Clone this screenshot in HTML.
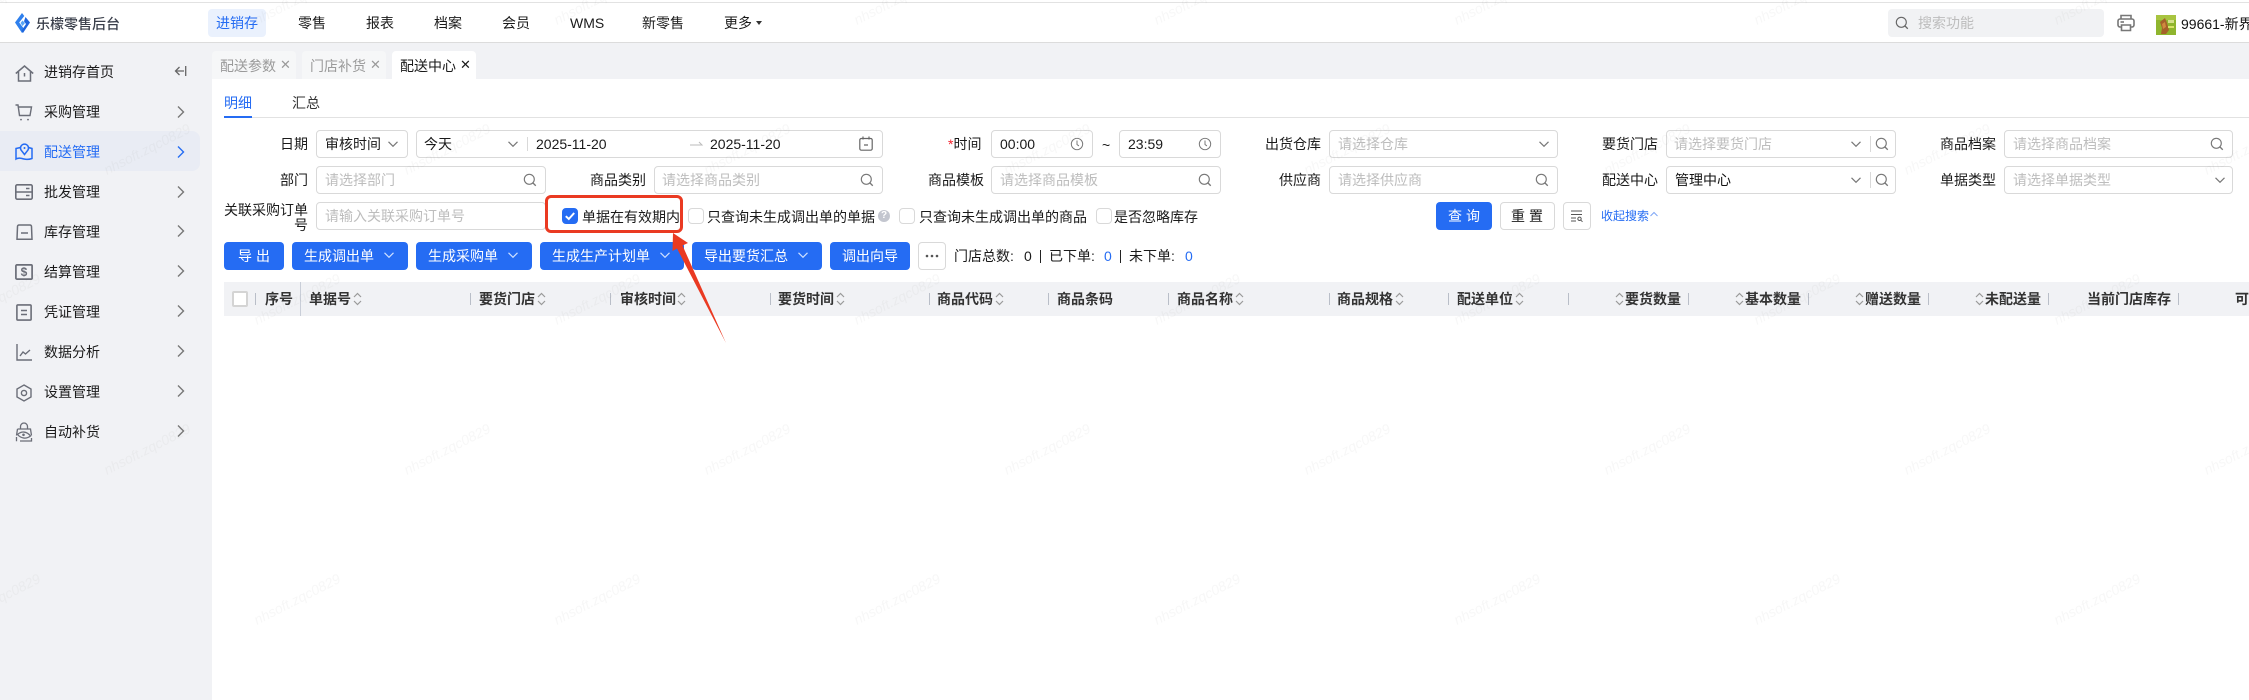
<!DOCTYPE html>
<html lang="zh">
<head>
<meta charset="utf-8">
<title>乐檬零售后台</title>
<style>
html,body{margin:0;padding:0;background:#fff}
body{width:2249px;height:700px;overflow:hidden;position:relative;font-family:"Liberation Sans","Noto Sans CJK SC",sans-serif;font-size:14px;color:#1a1a1a}
.a,.t,.b,.i,.cb{position:absolute}
.t{white-space:nowrap;line-height:20px;height:20px}
.i{box-sizing:border-box;height:28px;border:1px solid #d9d9d9;border-radius:4px;background:#fff}
.ph{color:#bdbdbd}
.b{box-sizing:border-box;top:242px;height:28px;background:#256cf3;border-radius:4px}
.w{color:#fff}
.cb{box-sizing:border-box;width:16px;height:16px;top:208px;border:1px solid #d9d9d9;border-radius:4px;background:#fff}
.th{font-weight:700;color:#333;top:289px}
.sp{position:absolute;top:293px;width:1px;height:12px;background:#b9bec8}
.so{position:absolute;top:292px;width:9px;height:14px}
.ic{position:absolute;overflow:visible}
.menu{top:13px;color:#1a1a1a}
.sm{left:44px;color:#1a1a1a}
</style>
</head>
<body>
<svg width="0" height="0" style="position:absolute">
<defs>
<symbol id="chev" viewBox="0 0 12 12"><path d="M1.5 3.8 6 8.3l4.5-4.5" fill="none" stroke="currentColor" stroke-width="1.2"/></symbol>
<symbol id="srch" viewBox="0 0 16 16"><circle cx="7.2" cy="7.2" r="5.7" fill="none" stroke="currentColor" stroke-width="1.3"/><path d="M11.4 11.4 14.6 14.6" fill="none" stroke="currentColor" stroke-width="1.5"/></symbol>
<symbol id="clock" viewBox="0 0 16 16"><circle cx="8" cy="8" r="6.5" fill="none" stroke="currentColor" stroke-width="1.1"/><path d="M8 4v4.6l2.2 1.6" fill="none" stroke="currentColor" stroke-width="1.1"/></symbol>
<symbol id="sort" viewBox="0 0 9 14"><path d="M1 5 4.5 1.5 8 5M1 9l3.5 3.5L8 9" fill="none" stroke="#9a9a9a" stroke-width="1.2"/></symbol>
<symbol id="right" viewBox="0 0 10 14"><path d="M2 1.5 7.5 7 2 12.5" fill="none" stroke="currentColor" stroke-width="1.4"/></symbol>
</defs>
</svg>

<!-- top bar -->
<div class="a" style="left:0;top:2px;width:2249px;height:1px;background:#e2e2e2"></div>
<div class="a" style="left:0;top:42px;width:2249px;height:1px;background:#dcdcdc"></div>
<svg class="ic" style="left:15px;top:13px" width="15" height="20" viewBox="0 0 15 20"><path d="M7 0 0 9.500 7 20 9.500 16.500 4.200 9.500 9.300 3Z" fill="#2f80ed"/><path d="M10.500 4 15 9.500 8 20 6.500 17.800 11 11 9 8.300Z" fill="#1f66dd"/><path d="M7.500 7.500 10 10 7.500 13 5.500 10Z" fill="#59a5f5"/></svg>
<div class="t" style="left:36px;top:14px;font-weight:500;color:#3a3f4b">乐檬零售后台</div>
<div class="a" style="left:208px;top:9px;width:58px;height:28px;border-radius:4px;background:#eaf1fd"></div>
<div class="t" style="left:216px;top:13px;color:#256cf3">进销存</div>
<div class="t menu" style="left:298px">零售</div>
<div class="t menu" style="left:366px">报表</div>
<div class="t menu" style="left:434px">档案</div>
<div class="t menu" style="left:502px">会员</div>
<div class="t menu" style="left:570px">WMS</div>
<div class="t menu" style="left:642px">新零售</div>
<div class="t menu" style="left:724px">更多</div>
<div class="a" style="left:756px;top:21px;width:0;height:0;border:3.5px solid transparent;border-top:4px solid #333;border-bottom:0"></div>

<div class="a" style="left:1888px;top:9px;width:216px;height:28px;border-radius:4px;background:#f1f2f4"></div>
<svg class="ic" style="left:1895px;top:16px;color:#666" width="14" height="14"><use href="#srch"/></svg>
<div class="t ph" style="left:1918px;top:13px">搜索功能</div>
<svg class="ic" style="left:2117px;top:14px" width="18" height="18" viewBox="0 0 18 18" fill="none" stroke="#777" stroke-width="1.6"><path d="M4 5V1.5h10V5"/><rect x="1" y="5" width="16" height="8" rx="2"/><path d="M4.5 11h9v5.5h-9z" fill="#fff"/><path d="M3.5 8H7"/></svg>
<svg class="ic" style="left:2156px;top:15px" width="20" height="20" viewBox="0 0 20 20"><rect width="20" height="20" fill="#8fb52e"/><rect x="0" y="0" width="20" height="5" fill="#a8c440"/><path d="M4 7 9 3l2 5 2 7-3 4H5l1-6z" fill="#a5612a"/><path d="M6 9l3-2 1 5-3 2z" fill="#d08a3e"/><rect x="12" y="5" width="6" height="3" fill="#d5e08c"/><rect x="12" y="11" width="6" height="2" fill="#d9e36a"/></svg>
<div class="t" style="left:2181px;top:14px;width:68px;overflow:hidden;color:#111">99661-新界店铺</div>

<!-- sidebar -->
<div class="a" style="left:0;top:43px;width:212px;height:657px;background:#f1f2f5"></div>
<div class="a" style="left:212px;top:43px;width:2037px;height:36px;background:#f1f2f5"></div>
<div class="a" style="left:0;top:131px;width:200px;height:40px;background:#e9ecf4;border-radius:0 8px 8px 0"></div>

<svg class="ic" style="left:15px;top:65px" width="19" height="17" viewBox="0 0 19 17" fill="none" stroke="#6b6e78" stroke-width="1.5"><path d="M0.8 8.5 9.5 1l8.7 7.5"/><path d="M3.5 6.8V16h12V6.8"/><path d="M9.5 8v3.5"/></svg>
<div class="t sm" style="top:62px">进销存首页</div>
<svg class="ic" style="left:173px;top:64px" width="14" height="14" viewBox="0 0 14 14" fill="none" stroke="#666" stroke-width="1.3"><path d="M6.5 3 2.5 7l4 4M2.5 7H11M12.7 2v10"/></svg>

<svg class="ic" style="left:15px;top:104px" width="18" height="17" viewBox="0 0 18 17" fill="none" stroke="#6b6e78" stroke-width="1.4"><path d="M0.5 1H3l1.500 10.500H15L16.500 3H3.300"/><circle cx="6" cy="15.600" r=".9" fill="#6b6e78" stroke="none"/><circle cx="13" cy="15.600" r=".9" fill="#6b6e78" stroke="none"/></svg>
<div class="t sm" style="top:102px">采购管理</div>

<svg class="ic" style="left:15px;top:143px" width="18" height="17" viewBox="0 0 18 17" fill="none" stroke="#256cf3" stroke-width="1.5"><path d="M5.500 4.500 1 5.500V16c2.500-1.500 5-.800 8 0s5 .500 8-.500V5.500l-3.500-1"/><path d="M9.500 11.500 6 7a4 4 0 1 1 7 0z"/><circle cx="9.500" cy="5" r="1" fill="#256cf3" stroke="none"/></svg>
<div class="t sm" style="top:142px;color:#256cf3">配送管理</div>

<svg class="ic" style="left:15px;top:184px" width="18" height="16" viewBox="0 0 18 16" fill="none" stroke="#6b6e78" stroke-width="1.6"><rect x=".8" y=".8" width="16.400" height="14.400" rx="1.500"/><path d="M.8 8h16.400M11 4.500h3.500M11 11.500h3.500"/></svg>
<div class="t sm" style="top:182px">批发管理</div>

<svg class="ic" style="left:16px;top:224px" width="17" height="17" viewBox="0 0 17 17" fill="none" stroke="#6b6e78" stroke-width="1.500"><path d="M3 1h11a1.500 1.500 0 0 1 1.500 1.500L16 15.200H1L1.500 2.500A1.500 1.500 0 0 1 3 1z"/><path d="M5 9h7"/></svg>
<div class="t sm" style="top:222px">库存管理</div>

<svg class="ic" style="left:15px;top:264px" width="18" height="16" viewBox="0 0 18 16" fill="none" stroke="#6b6e78" stroke-width="1.700"><rect x=".9" y=".9" width="16.200" height="14.200" rx="1"/></svg>
<div class="t" style="left:19px;top:262px;width:10px;text-align:center;font-size:12px;font-weight:700;color:#6b6e78">$</div>
<div class="t sm" style="top:262px">结算管理</div>

<svg class="ic" style="left:16px;top:304px" width="16" height="17" viewBox="0 0 16 17" fill="none" stroke="#6b6e78" stroke-width="1.600"><rect x=".9" y=".9" width="14.200" height="15.200" rx="1"/><path d="M5 6.500h6M5 10.500h6"/></svg>
<div class="t sm" style="top:302px">凭证管理</div>

<svg class="ic" style="left:16px;top:344px" width="16" height="17" viewBox="0 0 16 17" fill="none" stroke="#6b6e78" stroke-width="1.400"><path d="M1 0v16h15"/><path d="M4 12l3-4 2.500 2L14 6"/></svg>
<div class="t sm" style="top:342px">数据分析</div>

<svg class="ic" style="left:16px;top:384px" width="16" height="18" viewBox="0 0 16 18" fill="none" stroke="#6b6e78" stroke-width="1.400"><path d="M8 1l7 4v8l-7 4-7-4V5z"/><circle cx="8" cy="9" r="2.600"/></svg>
<div class="t sm" style="top:382px">设置管理</div>

<svg class="ic" style="left:15px;top:423px" width="18" height="19" viewBox="0 0 18 19" fill="none" stroke="#6b6e78" stroke-width="1.300"><path d="M5.500 6V3.500a3.500 3.500 0 0 1 7 0V6"/><path d="M2.500 6h13l1 6.500M1.500 12.500 2.500 6M1.500 18.300V14M5 18h11.500v-3"/><path d="M2.500 11.500c4-3.500 9-3.500 13 1.500-4 3-9 3-13-1.500z"/><circle cx="8.500" cy="11.800" r="1.300" fill="#6b6e78" stroke="none"/></svg>
<div class="t sm" style="top:422px">自动补货</div>

<svg class="ic" style="left:176px;top:105px;color:#777" width="10" height="14"><use href="#right"/></svg>
<svg class="ic" style="left:176px;top:145px;color:#256cf3" width="10" height="14"><use href="#right"/></svg>
<svg class="ic" style="left:176px;top:185px;color:#777" width="10" height="14"><use href="#right"/></svg>
<svg class="ic" style="left:176px;top:224px;color:#777" width="10" height="14"><use href="#right"/></svg>
<svg class="ic" style="left:176px;top:264px;color:#777" width="10" height="14"><use href="#right"/></svg>
<svg class="ic" style="left:176px;top:304px;color:#777" width="10" height="14"><use href="#right"/></svg>
<svg class="ic" style="left:176px;top:344px;color:#777" width="10" height="14"><use href="#right"/></svg>
<svg class="ic" style="left:176px;top:384px;color:#777" width="10" height="14"><use href="#right"/></svg>
<svg class="ic" style="left:176px;top:424px;color:#777" width="10" height="14"><use href="#right"/></svg>

<!-- tabs -->
<div class="a" style="left:212px;top:51px;width:84px;height:28px;background:#f6f7f8;border-radius:4px 4px 0 0"></div>
<div class="t" style="left:220px;top:56px;color:#9a9a9a">配送参数</div>
<div class="t" style="left:280px;top:55px;color:#9a9a9a;font-size:13px">✕</div>
<div class="a" style="left:302px;top:51px;width:84px;height:28px;background:#f6f7f8;border-radius:4px 4px 0 0"></div>
<div class="t" style="left:310px;top:56px;color:#9a9a9a">门店补货</div>
<div class="t" style="left:370px;top:55px;color:#9a9a9a;font-size:13px">✕</div>
<div class="a" style="left:392px;top:51px;width:84px;height:28px;background:#fff;border-radius:4px 4px 0 0"></div>
<div class="t" style="left:400px;top:56px">配送中心</div>
<div class="t" style="left:460px;top:55px;font-size:13px">✕</div>

<!-- sub tabs -->
<div class="t" style="left:224px;top:93px;color:#256cf3">明细</div>
<div class="t" style="left:292px;top:93px;color:#333">汇总</div>
<div class="a" style="left:224px;top:117px;width:2025px;height:1px;background:#e2e2e2"></div>
<div class="a" style="left:224px;top:116px;width:28px;height:2px;background:#256cf3"></div>

<!-- row 1 -->
<div class="t" style="left:280px;top:134px">日期</div>
<div class="i" style="left:316px;top:130px;width:92px"></div>
<div class="t" style="left:325px;top:134px">审核时间</div>
<svg class="ic" style="left:387px;top:138px;color:#777" width="12" height="12"><use href="#chev"/></svg>
<div class="i" style="left:416px;top:130px;width:467px"></div>
<div class="t" style="left:424px;top:134px">今天</div>
<svg class="ic" style="left:507px;top:138px;color:#777" width="12" height="12"><use href="#chev"/></svg>
<div class="a" style="left:527px;top:137px;width:1px;height:14px;background:#d9d9d9"></div>
<div class="t" style="left:536px;top:134px">2025-11-20</div>
<svg class="ic" style="left:690px;top:140px" width="13" height="8" viewBox="0 0 13 8" fill="none" stroke="#bbb"><path d="M0 5h12L9 2"/></svg>
<div class="t" style="left:710px;top:134px">2025-11-20</div>
<svg class="ic" style="left:859px;top:136px" width="14" height="15" viewBox="0 0 14 15" fill="none" stroke="#666" stroke-width="1.200"><rect x=".8" y="2.500" width="12.400" height="11.700" rx="1.500"/><path d="M4 .5v3M10 .5v3M5 9h4"/></svg>

<div class="t" style="left:948px;top:134px"><span style="color:#f5222d">*</span>时间</div>
<div class="i" style="left:991px;top:130px;width:102px"></div>
<div class="t" style="left:1000px;top:134px">00:00</div>
<svg class="ic" style="left:1070px;top:137px;color:#777" width="14" height="14"><use href="#clock"/></svg>
<div class="t" style="left:1102px;top:135px">~</div>
<div class="i" style="left:1119px;top:130px;width:102px"></div>
<div class="t" style="left:1128px;top:134px">23:59</div>
<svg class="ic" style="left:1198px;top:137px;color:#777" width="14" height="14"><use href="#clock"/></svg>

<div class="t" style="left:1265px;top:134px">出货仓库</div>
<div class="i" style="left:1329px;top:130px;width:229px"></div>
<div class="t ph" style="left:1338px;top:134px">请选择仓库</div>
<svg class="ic" style="left:1538px;top:138px;color:#777" width="12" height="12"><use href="#chev"/></svg>

<div class="t" style="left:1602px;top:134px">要货门店</div>
<div class="i" style="left:1666px;top:130px;width:230px"></div>
<div class="t ph" style="left:1674px;top:134px">请选择要货门店</div>
<svg class="ic" style="left:1850px;top:138px;color:#777" width="12" height="12"><use href="#chev"/></svg>
<div class="a" style="left:1870px;top:136px;width:1px;height:16px;background:#d9d9d9"></div>
<svg class="ic" style="left:1875px;top:137px;color:#777" width="14" height="14"><use href="#srch"/></svg>

<div class="t" style="left:1940px;top:134px">商品档案</div>
<div class="i" style="left:2004px;top:130px;width:229px"></div>
<div class="t ph" style="left:2013px;top:134px">请选择商品档案</div>
<svg class="ic" style="left:2210px;top:137px;color:#777" width="14" height="14"><use href="#srch"/></svg>

<!-- row 2 -->
<div class="t" style="left:280px;top:170px">部门</div>
<div class="i" style="left:316px;top:166px;width:230px"></div>
<div class="t ph" style="left:325px;top:170px">请选择部门</div>
<svg class="ic" style="left:523px;top:173px;color:#777" width="14" height="14"><use href="#srch"/></svg>

<div class="t" style="left:590px;top:170px">商品类别</div>
<div class="i" style="left:654px;top:166px;width:229px"></div>
<div class="t ph" style="left:662px;top:170px">请选择商品类别</div>
<svg class="ic" style="left:860px;top:173px;color:#777" width="14" height="14"><use href="#srch"/></svg>

<div class="t" style="left:928px;top:170px">商品模板</div>
<div class="i" style="left:991px;top:166px;width:230px"></div>
<div class="t ph" style="left:1000px;top:170px">请选择商品模板</div>
<svg class="ic" style="left:1198px;top:173px;color:#777" width="14" height="14"><use href="#srch"/></svg>

<div class="t" style="left:1279px;top:170px">供应商</div>
<div class="i" style="left:1329px;top:166px;width:229px"></div>
<div class="t ph" style="left:1338px;top:170px">请选择供应商</div>
<svg class="ic" style="left:1535px;top:173px;color:#777" width="14" height="14"><use href="#srch"/></svg>

<div class="t" style="left:1602px;top:170px">配送中心</div>
<div class="i" style="left:1666px;top:166px;width:230px"></div>
<div class="t" style="left:1675px;top:170px;color:#111">管理中心</div>
<svg class="ic" style="left:1850px;top:174px;color:#777" width="12" height="12"><use href="#chev"/></svg>
<div class="a" style="left:1870px;top:172px;width:1px;height:16px;background:#d9d9d9"></div>
<svg class="ic" style="left:1875px;top:173px;color:#777" width="14" height="14"><use href="#srch"/></svg>

<div class="t" style="left:1940px;top:170px">单据类型</div>
<div class="i" style="left:2004px;top:166px;width:229px"></div>
<div class="t ph" style="left:2013px;top:170px">请选择单据类型</div>
<svg class="ic" style="left:2214px;top:174px;color:#777" width="12" height="12"><use href="#chev"/></svg>

<!-- row 3 -->
<div class="t" style="left:224px;top:200px">关联采购订单</div>
<div class="t" style="left:294px;top:215px">号</div>
<div class="i" style="left:316px;top:202px;width:230px"></div>
<div class="t ph" style="left:325px;top:206px">请输入关联采购订单号</div>

<div class="cb" style="left:562px;background:#256cf3;border-color:#256cf3"></div>
<svg class="ic" style="left:562px;top:208px" width="16" height="16" viewBox="0 0 16 16" fill="none" stroke="#fff" stroke-width="2"><path d="M3.800 8.200 6.800 11l5.400-6"/></svg>
<div class="t" style="left:582px;top:207px">单据在有效期内</div>
<div class="cb" style="left:688px"></div>
<div class="t" style="left:707px;top:207px">只查询未生成调出单的单据</div>
<div class="a" style="left:878px;top:210px;width:12px;height:12px;border-radius:50%;background:#c3c6cf;color:#fff;font-size:10px;line-height:12px;text-align:center;font-weight:700">?</div>
<div class="cb" style="left:899px"></div>
<div class="t" style="left:919px;top:207px">只查询未生成调出单的商品</div>
<div class="cb" style="left:1096px"></div>
<div class="t" style="left:1114px;top:207px">是否忽略库存</div>

<div class="a" style="left:1436px;top:202px;width:56px;height:28px;background:#256cf3;border-radius:4px"></div>
<div class="t w" style="left:1448px;top:206px;letter-spacing:4px">查询</div>
<div class="a" style="box-sizing:border-box;left:1500px;top:202px;width:55px;height:28px;background:#fff;border:1px solid #d9d9d9;border-radius:4px"></div>
<div class="t" style="left:1511px;top:206px;letter-spacing:4px">重置</div>
<div class="a" style="box-sizing:border-box;left:1563px;top:202px;width:28px;height:28px;background:#fff;border:1px solid #d9d9d9;border-radius:4px"></div>
<svg class="ic" style="left:1571px;top:210px" width="12" height="12" viewBox="0 0 12 12" fill="none" stroke="#555" stroke-width="1"><path d="M0 1h11M0 4.500h11M0 8h5M0 11h5"/><circle cx="8.500" cy="8.800" r="1.700"/><path d="M10 10.300 11.500 11.800"/></svg>
<div class="t" style="left:1601px;top:206px;font-size:12px;color:#256cf3">收起搜索</div>
<svg class="ic" style="left:1650px;top:211px" width="8" height="6" viewBox="0 0 8 6" fill="none" stroke="#7ea6f5"><path d="M.5 5 4 1.500 7.500 5"/></svg>

<!-- buttons -->
<div class="b" style="left:224px;width:60px"></div>
<div class="t w" style="left:238px;top:246px;letter-spacing:4px">导出</div>
<div class="b" style="left:292px;width:116px"></div>
<div class="t w" style="left:304px;top:246px">生成调出单</div>
<svg class="ic" style="left:383px;top:249px;color:#cfe0ff" width="12" height="12"><use href="#chev"/></svg>
<div class="b" style="left:416px;width:116px"></div>
<div class="t w" style="left:428px;top:246px">生成采购单</div>
<svg class="ic" style="left:507px;top:249px;color:#cfe0ff" width="12" height="12"><use href="#chev"/></svg>
<div class="b" style="left:540px;width:144px"></div>
<div class="t w" style="left:552px;top:246px">生成生产计划单</div>
<svg class="ic" style="left:659px;top:249px;color:#cfe0ff" width="12" height="12"><use href="#chev"/></svg>
<div class="b" style="left:692px;width:130px"></div>
<div class="t w" style="left:704px;top:246px">导出要货汇总</div>
<svg class="ic" style="left:797px;top:249px;color:#cfe0ff" width="12" height="12"><use href="#chev"/></svg>
<div class="b" style="left:830px;width:80px"></div>
<div class="t w" style="left:842px;top:246px">调出向导</div>
<div class="a" style="box-sizing:border-box;left:918px;top:242px;width:28px;height:28px;background:#fff;border:1px solid #d9d9d9;border-radius:4px"></div>
<svg class="ic" style="left:925px;top:254px" width="14" height="4" viewBox="0 0 14 4" fill="#555"><circle cx="2" cy="2" r="1.300"/><circle cx="7" cy="2" r="1.300"/><circle cx="12" cy="2" r="1.300"/></svg>
<div class="t" style="left:954px;top:246px">门店总数:</div>
<div class="t" style="left:1024px;top:246px">0</div>
<div class="a" style="left:1040px;top:250px;width:1px;height:13px;background:#222"></div>
<div class="t" style="left:1049px;top:246px">已下单:</div>
<div class="t" style="left:1104px;top:246px;color:#256cf3">0</div>
<div class="a" style="left:1120px;top:250px;width:1px;height:13px;background:#222"></div>
<div class="t" style="left:1129px;top:246px">未下单:</div>
<div class="t" style="left:1185px;top:246px;color:#256cf3">0</div>

<!-- table header -->
<div class="a" style="left:224px;top:282px;width:2025px;height:34px;background:#f1f2f5"></div>
<div class="a" style="box-sizing:border-box;left:232px;top:291px;width:16px;height:16px;background:#fff;border:2px solid #d4d4d4;border-radius:2px"></div>
<div class="sp" style="left:255px"></div>
<div class="t th" style="left:265px">序号</div>
<div class="a" style="left:300px;top:282px;width:1px;height:34px;background:#c9ced8"></div>
<div class="t th" style="left:309px">单据号</div><svg class="so" style="left:353px"><use href="#sort"/></svg>
<div class="sp" style="left:470px"></div>
<div class="t th" style="left:479px">要货门店</div><svg class="so" style="left:537px"><use href="#sort"/></svg>
<div class="sp" style="left:610px"></div>
<div class="t th" style="left:620px">审核时间</div><svg class="so" style="left:677px"><use href="#sort"/></svg>
<div class="sp" style="left:770px"></div>
<div class="t th" style="left:778px">要货时间</div><svg class="so" style="left:836px"><use href="#sort"/></svg>
<div class="sp" style="left:929px"></div>
<div class="t th" style="left:937px">商品代码</div><svg class="so" style="left:995px"><use href="#sort"/></svg>
<div class="sp" style="left:1048px"></div>
<div class="t th" style="left:1057px">商品条码</div>
<div class="sp" style="left:1168px"></div>
<div class="t th" style="left:1177px">商品名称</div><svg class="so" style="left:1235px"><use href="#sort"/></svg>
<div class="sp" style="left:1329px"></div>
<div class="t th" style="left:1337px">商品规格</div><svg class="so" style="left:1395px"><use href="#sort"/></svg>
<div class="sp" style="left:1448px"></div>
<div class="t th" style="left:1457px">配送单位</div><svg class="so" style="left:1515px"><use href="#sort"/></svg>
<div class="sp" style="left:1568px"></div>
<svg class="so" style="left:1615px"><use href="#sort"/></svg><div class="t th" style="left:1625px">要货数量</div>
<div class="sp" style="left:1688px"></div>
<svg class="so" style="left:1735px"><use href="#sort"/></svg><div class="t th" style="left:1745px">基本数量</div>
<div class="sp" style="left:1808px"></div>
<svg class="so" style="left:1855px"><use href="#sort"/></svg><div class="t th" style="left:1865px">赠送数量</div>
<div class="sp" style="left:1928px"></div>
<svg class="so" style="left:1975px"><use href="#sort"/></svg><div class="t th" style="left:1985px">未配送量</div>
<div class="sp" style="left:2048px"></div>
<div class="t th" style="left:2087px">当前门店库存</div>
<div class="sp" style="left:2178px"></div>
<div class="t th" style="left:2235px;width:14px;overflow:hidden">可用库存</div>

<!-- red annotation -->
<div class="a" style="box-sizing:border-box;left:545px;top:195px;width:138px;height:38px;border:3px solid #ea3a22;border-radius:6px"></div>
<svg class="ic" style="left:0;top:0" width="2249" height="700" viewBox="0 0 2249 700"><path d="M673 233 688 243 682.500 245.500 726 343 677 248.500 672.500 251Z" fill="#ea3a22"/></svg>

<!-- watermark -->
<svg class="ic" style="left:0;top:0;pointer-events:none" width="2249" height="700">
<defs>
<pattern id="wm" patternUnits="userSpaceOnUse" x="95" y="120" width="300" height="300">
<text transform="translate(12 55) rotate(-27)" font-family="Liberation Sans, sans-serif" font-size="14" font-style="italic" fill="rgba(60,60,70,.045)">nhsoft.zqc0829</text>
<text transform="translate(162 205) rotate(-27)" font-family="Liberation Sans, sans-serif" font-size="14" font-style="italic" fill="rgba(60,60,70,.045)">nhsoft.zqc0829</text>
</pattern>
</defs>
<rect width="2249" height="700" fill="url(#wm)"/>
</svg>
</body>
</html>
